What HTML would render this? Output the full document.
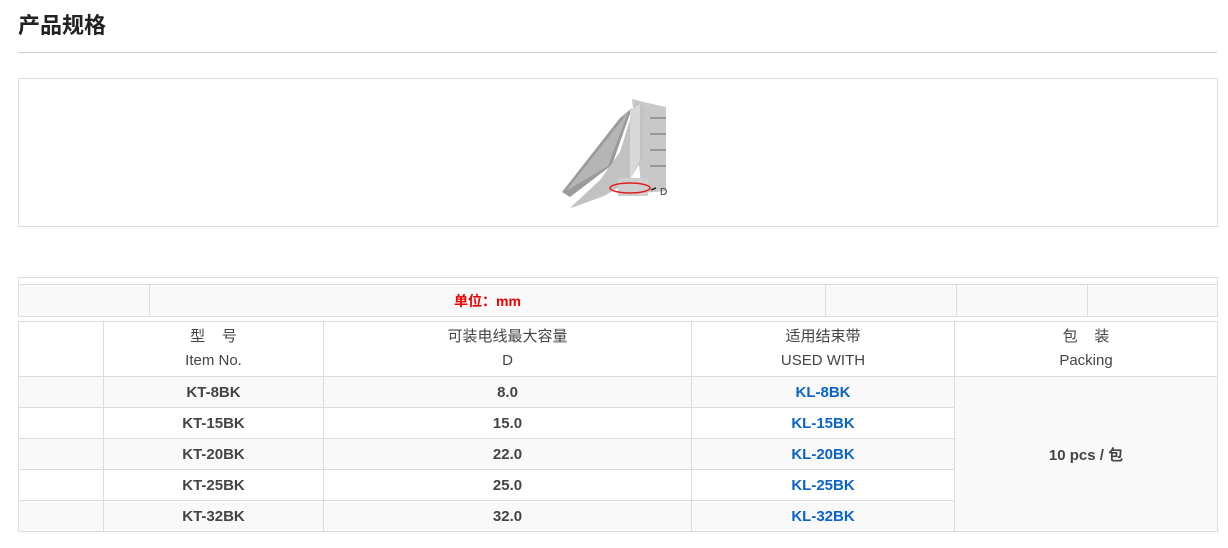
<!DOCTYPE html>
<html><head><meta charset="utf-8"><style>
body{margin:0;background:#fff;font-family:"Liberation Sans","Noto Sans CJK SC",sans-serif;color:#444;width:1228px;height:548px;overflow:hidden;position:relative}
.a{position:absolute;box-sizing:border-box}
h1{position:absolute;left:18px;top:8px;margin:0;font-size:22px;font-weight:bold;color:#222;font-family:"Noto Sans CJK SC",sans-serif}
table{position:absolute;border-collapse:collapse;font-size:14px;table-layout:fixed}
td{border:1px solid #ddd;text-align:center;padding:0}
.h td{font-size:15px}
.g{background:#f9f9f9}
.b{font-weight:bold;color:#444;font-size:15px}
.bl{font-weight:bold;color:#0a64c8;font-size:15px}
</style></head><body>
<h1>产品规格</h1>
<div class="a" style="left:18px;top:52px;width:1199px;height:1px;background:#ccc"></div>
<div class="a" style="left:18px;top:78px;width:1200px;height:149px;border:1px solid #ddd"></div>
<svg class="a" style="left:560px;top:92px" width="110" height="120" viewBox="560 92 110 120">
<path d="M632 99 L648 103 L666 107 L666 191 L642 193 Z" fill="#c8c8c8"/>
<path d="M650 118h16M650 134h16M650 150h16M650 166h16" stroke="#999" stroke-width="2"/>
<path d="M562 192 L620 118 L632 108 L612 165 L570 197 Z" fill="#9a9a9a"/>
<path d="M566 191 L622 120 L628 112 L608 166 Z" fill="#b5b5b5"/>
<path d="M570 208 L600 180 L620 152 L636 100 L644 108 L642 160 L628 182 L604 196 L574 207 Z" fill="#c2c2c2"/>
<path d="M630 110 L640 104 L640 160 L630 180 Z" fill="#d8d8d8"/>
<rect x="618" y="178" width="30" height="18" fill="#cfcfcf"/>
<ellipse cx="630" cy="188" rx="20" ry="5" fill="none" stroke="#e02020" stroke-width="1.5"/>
<path d="M651 190 L656 188" stroke="#222" stroke-width="1.5"/>
<text x="660" y="195" font-size="10" fill="#333" font-family="Liberation Sans">D</text>
</svg>
<div class="a" style="left:18px;top:277px;width:1200px;height:8px;border:1px solid #ddd;border-bottom:none"></div>
<table style="left:18px;top:284px;width:1200px;height:33px">
<tr class="g"><td style="width:130px"></td><td style="width:675px;color:#e00;font-weight:bold">单位：mm</td><td style="width:130px"></td><td style="width:130px"></td><td></td></tr>
</table>
<table style="left:18px;top:321px;width:1200px">
<col style="width:85px"><col style="width:220px"><col style="width:368px"><col style="width:263px"><col>
<tr class="h" style="height:55px;line-height:24px"><td></td><td>型&nbsp;&nbsp;&nbsp;&nbsp;号<br>Item No.</td><td>可装电线最大容量<br>D</td><td>适用结束带<br>USED WITH</td><td>包&nbsp;&nbsp;&nbsp;&nbsp;装<br>Packing</td></tr>
<tr class="g" style="height:31px"><td></td><td class="b">KT-8BK</td><td class="b">8.0</td><td class="bl">KL-8BK</td><td rowspan="5" class="b g">10 pcs / 包</td></tr>
<tr style="height:31px;background:#fff"><td></td><td class="b">KT-15BK</td><td class="b">15.0</td><td class="bl">KL-15BK</td></tr>
<tr class="g" style="height:31px"><td></td><td class="b">KT-20BK</td><td class="b">22.0</td><td class="bl">KL-20BK</td></tr>
<tr style="height:31px;background:#fff"><td></td><td class="b">KT-25BK</td><td class="b">25.0</td><td class="bl">KL-25BK</td></tr>
<tr class="g" style="height:31px"><td></td><td class="b">KT-32BK</td><td class="b">32.0</td><td class="bl">KL-32BK</td></tr>
</table>
</body></html>
